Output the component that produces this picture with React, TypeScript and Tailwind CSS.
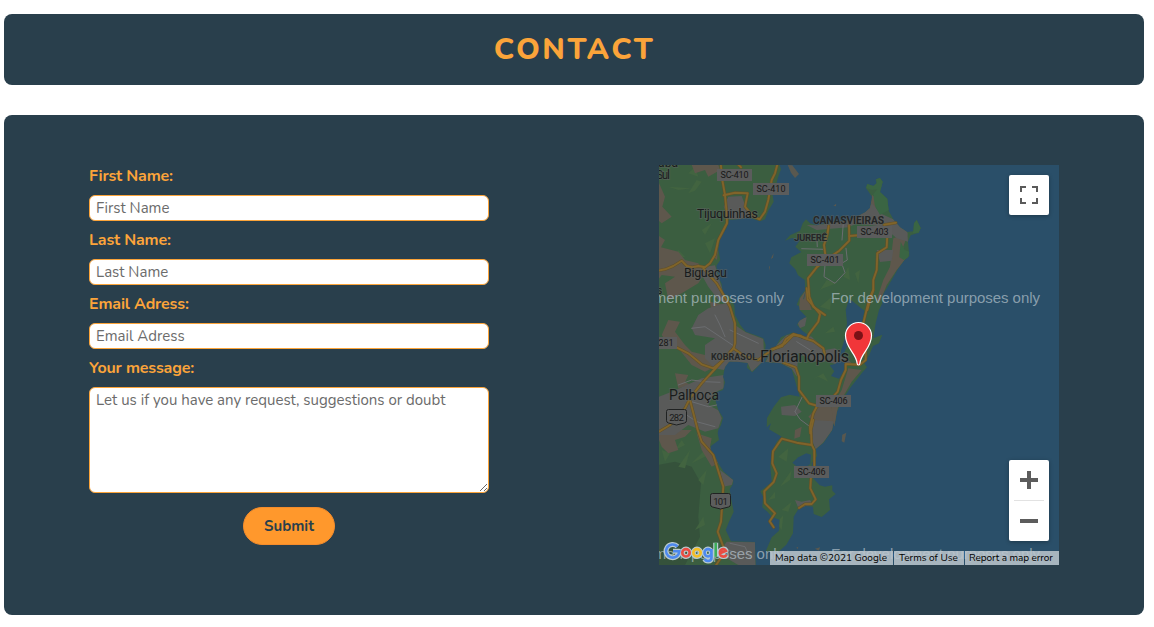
import React from "react";

type Pair = [number, number];

// Scales a list of traced points down to map coordinates.
function trace(ox: number, oy: number, pts: string): string {
  return pts
    .trim()
    .split(/\s+/)
    .map((s) => s.split(",").map(Number) as unknown as Pair)
    .map(([x, y]) => `${(ox + x / 3).toFixed(1)},${(oy + y / 3).toFixed(1)}`)
    .join(" ");
}

const nw = (p: string) => trace(655, 160, p);
const west = (p: string) => trace(655, 295, p);
const sw = (p: string) => trace(655, 430, p);
const north = (p: string) => trace(780, 170, p);
const mid = (p: string) => trace(745, 290, p);
const south = (p: string) => trace(745, 420, p);

const mainland = [
  "650,160",
  nw("372,10 378,28 368,55 362,80 352,100 356,125 340,152 330,178 316,184 296,178 280,172 250,178 222,180 214,205 196,235 190,268 196,300 184,318 190,350 200,372 204,400"),
  west("225,5 238,30 240,60 256,90 272,110 300,120 325,130 332,150 326,196 308,215 292,232 276,218 278,204 245,200 222,200 210,216 204,245 210,262 204,285 188,290 182,318 190,345 204,368 198,390 190,405"),
  sw("188,10 192,30 168,48 166,62 180,78 190,100 206,125 235,150 234,162 224,178 230,215 236,245 222,275 212,300 228,334 300,336 302,405 330,410"),
  "650,570",
].join(" ");

const island = [
  north("15,212 30,196 60,182 68,160 78,148 90,160 110,166 140,158 200,152 232,140 256,126 270,114 276,80 258,54 262,42 280,48 290,40 288,28 300,24 308,35 300,66 322,86 326,122 340,148 360,172 382,186 400,184 402,160 410,150 422,174 416,188 392,196 384,215 388,258 372,272 352,300 335,330 310,372"),
  mid("412,40 402,60 392,100 385,145 412,134 402,160 384,168 375,190 358,220 366,232 350,250 336,268 318,290 292,330 276,365 268,410"),
  south("265,8 262,30 236,68 212,88 216,108 200,130 202,172 224,196 240,200 262,196 262,212 272,222 252,238 255,270 230,291 206,282 204,260 182,258 160,268 146,290 144,340 124,374 100,396 62,394 80,352 102,332 104,300 80,290 68,276 52,262 54,230 46,214 80,186 76,140 80,96 96,64 110,50 72,28 78,10"),
  mid("65,412 66,384 86,350 108,322 134,314 164,320 150,272 140,238 106,220 60,216 70,190 92,170 108,142 140,128 170,146 190,136 172,122 156,104 164,92 184,80 164,60 162,40 178,25 182,0"),
  north("62,412 50,404 60,380 76,360 74,330 54,316 46,298 28,280 34,262 64,246 46,230 62,208 36,204"),
].join(" ");

const urban: string[] = [
  nw("220,110 260,108 272,140 290,178 250,178 222,178 206,140"),
  nw("150,320 180,316 190,350 206,400 214,430 190,420 160,380 140,345"),
  west("110,100 130,60 160,40 225,20 240,90 272,112 325,132 328,196 290,230 278,204 225,200 206,225 180,220 150,190 150,150 180,130 120,120"),
  west("0,310 50,290 140,250 206,240 206,280 180,292 160,330 190,346 200,370 190,400 150,410 100,390 60,420 0,420"),
  sw("195,120 235,150 230,165 205,170"),
  sw("215,335 300,337 302,405 250,405 190,370"),
  north("80,165 110,166 200,152 256,126 276,100 300,130 340,148 382,186 384,215 350,205 310,170 230,160 206,172 110,180"),
  north("290,240 340,240 335,272 300,276"),
  mid("125,135 160,130 200,140 240,180 240,215 210,215 160,190 155,260 140,236 108,220 62,215 82,178"),
  mid("108,350 150,345 170,365 150,378 110,375"),
  mid("240,180 270,175 300,200 320,220 280,225 250,215"),
  south("202,0 265,4 262,30 234,68 212,88 200,60"),
  south("150,240 170,245 195,240 205,255 160,264"),
  mid("155,90 185,82 180,108 164,115"),
];

const earth: string[] = [
  nw("8,60 30,110 22,140 50,170 20,190 8,180"),
  nw("110,15 190,15 196,30 160,50 150,30 120,40"),
  nw("8,225 30,240 18,262 70,275 90,300 130,310 150,340 130,370 80,400 40,420 30,370 60,350 20,345 8,360"),
  nw("220,180 206,225 190,240 186,265 176,290 186,300 192,240 200,220"),
  west("40,75 75,80 60,110 90,150 110,170 150,180 180,215 150,230 110,210 70,160 40,150 20,120"),
  west("60,235 100,240 90,262 110,270 70,280"),
  west("165,20 210,30 190,80 170,60"),
  west("8,340 80,330 110,360 70,390 40,410 8,400"),
  sw("0,0 110,0 90,20 60,30 70,60 40,70 20,50"),
  sw("125,10 170,25 165,50 190,100 170,110 140,60"),
  north("340,205 384,190 370,230 378,265 350,300 320,345 300,395 290,390 310,330 330,290"),
  north("120,158 256,128 270,115 276,75 284,80 290,150 230,160"),
  mid("310,235 350,240 320,275 280,345 270,410 250,400 260,350 290,300"),
  mid("190,380 230,340 260,350 265,415 230,420"),
  south("150,30 170,20 165,50 148,56"),
  north("60,385 76,362 95,420 56,420"),
];

const lightGreen: string[] = [
  nw("100,100 125,60 140,65 120,92"), nw("40,80 110,85 70,90"), nw("140,210 170,190 150,225"),
  nw("100,40 120,22 130,50"), nw("55,300 70,270 90,290"), nw("230,130 250,122 260,160"),
  nw("150,250 180,235 165,280"), north("120,360 140,330 170,340 130,355"),
  north("190,320 205,290 210,330"), north("225,310 240,300 235,340"),
  mid("225,50 260,20 255,60"), mid("240,130 265,110 270,125"), mid("200,270 235,250 250,275 220,260"),
  sw("20,60 45,70 30,95"), sw("70,110 105,60 90,115"), sw("110,100 150,60 160,75"),
  sw("60,60 80,30 90,45"), sw("130,150 155,120 145,165"), south("100,110 130,85 125,125"),
  south("105,200 140,150 135,180"), south("70,240 90,215 90,235"), south("110,270 140,245 130,275"),
  sw("120,300 145,260 150,285"), sw("365,280 385,255 380,300"),
];

const darkGreen: string[] = [
  sw("8,105 60,95 110,110 138,160 130,260 135,320 90,405 8,405"),
];

const water: string[] = [
  mid("312,26 330,40 358,62 352,96 330,100 310,160 292,202 284,196 298,150 306,100 302,60"),
  mid("254,226 270,222 282,212 304,218 296,244 282,266 258,258 268,244"),
  south("142,128 160,112 184,100 198,104 196,132 176,146 156,140"),
];

const roads: string[] = [
  nw("197,10 202,60 210,105 215,160 216,190 190,240 180,285 165,310 150,322 130,318 112,322 95,318 80,302 55,318 30,328 8,332"),
  nw("248,12 258,22"),
  nw("368,10 360,40 350,60 340,120 330,155 314,178 295,170 270,140 278,100 240,98 206,106"),
  nw("145,325 185,370 200,395 225,440 240,490 240,550 236,565"),
  west("235,160 205,195 175,220 140,208 100,175 66,158 30,150 8,148"),
  west("205,195 140,265 105,310 90,340 45,390 8,412"),
  west("104,312 128,405 140,440 175,480 205,575 198,680 188,710 205,755 207,775 182,812"),
  west("235,160 270,185 310,195 350,165 390,145 415,120 435,122 450,130 475,138 505,160 512,190"),
  mid("185,-5 188,28 225,72 220,95 192,132 186,146 145,132 122,148 112,168 80,178"),
  mid("115,218 152,232 162,260 162,300 192,340 218,348 260,325 278,305 288,270 302,240 302,222 345,224 362,210 362,185 352,160 355,100 372,30 385,0"),
  mid("215,350 205,370 195,410 196,430"),
  south("205,0 198,30 200,75 155,68 110,56 84,94 82,130 95,160 86,186 58,214 60,250 90,280 74,304 86,322"),
  south("200,74 208,90 208,140 198,170 196,205 212,238 200,252 180,252 162,264"),
  north("146,168 142,195 132,225 138,270 112,290 84,325 88,380 100,410 135,435"),
  north("207,166 208,212 178,242 140,268"),
  north("208,198 245,195"),
  north("312,164 348,158"),
  north("322,195 320,232 292,250 290,300 280,330 280,360 270,390 262,420"),
];

const streets: string[] = [
  north("135,285 132,320 165,340 195,308 185,280 202,270 198,235"),
  north("65,236 130,238"), north("190,160 186,210"), north("110,195 112,230"),
  west("110,100 150,95 180,115 240,155"), west("180,60 195,90 210,125"), west("225,105 310,145"),
  west("70,270 110,255 150,260 195,262"), west("110,320 160,335 185,330"), west("80,350 125,380 180,395"),
  mid("150,365 172,320"), mid("150,365 165,388 195,410"), mid("155,155 195,180 218,210"),
  sw("225,340 270,350 285,385"), sw("205,355 250,370"),
];

const islets: string[] = [
  nw("398,15 412,16 432,42 420,54 408,38"),
  nw("540,135 544,132 542,140"), nw("350,290 356,280 354,292 348,298"), nw("342,320 345,318 344,332"),
  north("160,108 168,102 168,108"),
  south("292,44 304,38 298,68 290,64"),
  south("154,383 160,380 158,387"),
  sw("480,356 495,352 492,362"),
];

interface BadgeProps {
  x: number;
  y: number;
  text: string;
  w?: number;
}

function RouteBadge({ x, y, text, w = 35 }: BadgeProps) {
  return (
    <g>
      <rect x={x} y={y} width={w} height={12} fill="#5b5c5c" />
      <text x={x + w / 2} y={y + 9.2} fontSize={9} textAnchor="middle" textLength={w - 7} fill="#171717">
        {text}
      </text>
    </g>
  );
}

function Shield({ x, y, text }: BadgeProps) {
  return (
    <g>
      <path
        d={`M${x + 2} ${y}h16q2 0 2 2v9q0 2-2 2.500l-8 2-8-2q-2-.5-2-2.500v-9q0-2 2-2z`}
        fill="#5c5d5d"
        stroke="#202222"
        strokeWidth={1}
      />
      <text x={x + 10} y={y + 11} fontSize={9.500} textAnchor="middle" textLength={14.500} fill="#1a1a1a">
        {text}
      </text>
    </g>
  );
}

interface PlaceProps {
  x: number;
  y: number;
  size: number;
  len?: number;
  bold?: boolean;
  children: string;
}

function PlaceName({ x, y, size, len, bold, children }: PlaceProps) {
  return (
    <text
      x={x}
      y={y}
      fontSize={size}
      textLength={len}
      fontWeight={bold ? 700 : 400}
      fill={bold ? "#252727" : "#191b1b"}
      stroke="#5d6260"
      strokeWidth={bold ? 1.6 : 1.8}
      strokeOpacity={0.55}
      paintOrder="stroke"
    >
      {children}
    </text>
  );
}

function MapDrawing() {
  return (
    <svg viewBox="659 165 400 400" className="block h-[400px] w-[400px] font-['Roboto',sans-serif]">
      <defs>
        <clipPath id="land">
          <polygon points={mainland} />
          <polygon points={island} />
        </clipPath>
      </defs>
      <rect x={659} y={165} width={400} height={400} fill="#2a4f69" />
      <polygon points={mainland} fill="#3b5e40" />
      <polygon points={island} fill="#3a5e41" />
      <g clipPath="url(#land)">
        {darkGreen.map((p, i) => <polygon key={i} points={p} fill="#35523b" />)}
        {lightGreen.map((p, i) => <polygon key={i} points={p} fill="#426440" />)}
        {earth.map((p, i) => <polygon key={i} points={p} fill="#5e574c" />)}
        {urban.map((p, i) => <polygon key={i} points={p} fill="#595a59" />)}
        {water.map((p, i) => <polygon key={i} points={p} fill="#2a4f69" />)}
      </g>
      {islets.map((p, i) => <polygon key={i} points={p} fill="#59584f" />)}
      <polygon points={north("258,54 262,42 280,48 290,40 288,28 300,24 308,35 300,66 322,86 326,120 300,135 284,105 280,72 292,58 276,60")} fill="#3a6543" />
      <polygon points={north("400,184 402,160 410,150 422,174 416,188 398,190")} fill="#3a6543" />
      <polygon points={north("362,215 374,240 388,245 384,262 372,270 358,262")} fill="#3a6543" />
      <g fill="none" strokeLinejoin="round" strokeLinecap="round">
        {streets.map((p, i) => <polyline key={i} points={p} stroke="#6b6d70" strokeWidth={1} />)}
        {roads.map((p, i) => <polyline key={i} points={p} stroke="#5f5029" strokeWidth={3} />)}
        {roads.map((p, i) => <polyline key={i} points={p} stroke="#80642a" strokeWidth={1.900} />)}
      </g>

      <PlaceName x={658} y={167} size={12} len={20}>aba</PlaceName>
      <PlaceName x={656} y={179} size={12} len={14}>Sul</PlaceName>
      <PlaceName x={697} y={217.500} size={12.500} len={61}>Tijuquinhas</PlaceName>
      <PlaceName x={684} y={276.500} size={12.500} len={43}>Biguaçu</PlaceName>
      <PlaceName x={657} y={294} size={10}>s</PlaceName>
      <PlaceName x={813} y={223.500} size={10.300} len={71} bold>CANASVIEIRAS</PlaceName>
      <PlaceName x={794} y={240.500} size={9.800} len={33} bold>JURERÊ</PlaceName>
      <PlaceName x={711} y={359.500} size={9} len={46} bold>KOBRASOL</PlaceName>
      <PlaceName x={760} y={362} size={16} len={89}>Florianópolis</PlaceName>
      <PlaceName x={669} y={400} size={14} len={50}>Palhoça</PlaceName>

      <RouteBadge x={717} y={169} text="SC-410" />
      <RouteBadge x={753} y={183} text="SC-410" w={36} />
      <RouteBadge x={857} y={226} text="SC-403" />
      <RouteBadge x={807} y={254} text="SC-401" w={36} />
      <RouteBadge x={816} y={395} text="SC-406" />
      <RouteBadge x={794} y={466} text="SC-406" />
      <RouteBadge x={655} y={337} text="281" w={22} />
      <Shield x={666.500} y={409.500} text="282" />
      <Shield x={710.500} y={493.500} text="101" />

      <g className="font-['Liberation_Sans',sans-serif]" fontSize={15} fill="#b9c6cf" fillOpacity={0.68}>
        <text x={575} y={303} textLength={209}>For development purposes only</text>
        <text x={831} y={303} textLength={209}>For development purposes only</text>
        <text x={575} y={559} textLength={209}>For development purposes only</text>
        <text x={831} y={559} textLength={209}>For development purposes only</text>
      </g>

      <path
        d="M858.500 365c-.9 0-1.300-.8-1.400-1.800-.8-9.800-11.600-15-11.600-27.700a13 13 0 0 1 26 0c0 12.700-10.800 17.900-11.600 27.700-.1 1-.5 1.800-1.400 1.800z"
        fill="#f13639"
        stroke="#fff"
        strokeWidth={1.200}
      />
      <circle cx={858.500} cy={335.500} r={4.500} fill="#7a1116" />
    </svg>
  );
}

function GoogleMark() {
  return (
    <svg viewBox="0 0 66 26" className="absolute bottom-[-1px] left-1 h-[26px] w-[66px]" role="img" aria-label="Google">
      <g fill="none" stroke="#b8cad0" strokeWidth="5" strokeLinejoin="round">
        <path d="M14.500 6.500A6.600 6.600 0 1 0 16.300 11.300H10" />
        <circle cx="23" cy="12.800" r="3.700" />
        <circle cx="34" cy="12.800" r="3.700" />
        <path d="M48.500 9v8.500q0 3.500-3.500 3.500-2.200 0-3.400-2M48.500 12.800a3.500 3.700 0 1 1-7 0 3.500 3.700 0 1 1 7 0M52.700 2.800v14M57 13.300l6-2.500q-1-2.100-3.100-1.700-3.200.8-3 4 .4 3.400 3.500 3.500 2 0 3.200-1.900" />
      </g>
      <g fill="none" strokeWidth="2.600">
        <path d="M14.500 6.500A6.600 6.600 0 1 0 16.300 11.300H10" stroke="#4d89ef" />
        <circle cx="23" cy="12.800" r="3.700" stroke="#e94d42" />
        <circle cx="34" cy="12.800" r="3.700" stroke="#f4bd25" />
        <path d="M48.500 9v8.500q0 3.500-3.500 3.500-2.200 0-3.400-2M48.500 12.800a3.500 3.700 0 1 1-7 0 3.500 3.700 0 1 1 7 0" stroke="#4d89ef" />
        <path d="M52.700 2.800v14" stroke="#3dad5a" />
        <path d="M57 13.300l6-2.500q-1-2.100-3.100-1.700-3.200.8-3 4 .4 3.400 3.500 3.500 2 0 3.200-1.900" stroke="#e94d42" />
      </g>
    </svg>
  );
}

function MapPanel() {
  return (
    <div className="relative h-[400px] w-[400px] overflow-hidden">
      <MapDrawing />
      <button aria-label="Fullscreen" className="absolute top-[10px] right-[10px] flex h-10 w-10 items-center justify-center rounded-[2px] bg-white shadow-[0_1px_4px_rgba(0,0,0,0.3)]">
        <svg viewBox="0 0 18 18" className="h-[18px] w-[18px]" fill="none" stroke="#5a5a5a" strokeWidth="2">
          <path d="M1 6V1h5M12 1h5v5M17 12v5h-5M6 17H1v-5" />
        </svg>
      </button>
      <div className="absolute right-[10px] bottom-6 flex h-[81px] w-10 flex-col items-center rounded-[2px] bg-white shadow-[0_1px_4px_rgba(0,0,0,0.3)]">
        <button aria-label="Zoom in" className="flex h-10 w-10 items-center justify-center">
          <svg viewBox="0 0 18 18" className="h-[18px] w-[18px]" fill="#5c5c5c"><path d="M7 0h4v7h7v4h-7v7H7v-7H0V7h7z" /></svg>
        </button>
        <div className="h-px w-[30px] bg-[#e2e2e2]" />
        <button aria-label="Zoom out" className="flex h-10 w-10 items-center justify-center">
          <svg viewBox="0 0 18 18" className="h-[18px] w-[18px]" fill="#5c5c5c"><path d="M0 7h18v4H0z" /></svg>
        </button>
      </div>
      <GoogleMark />
      <div className="absolute right-0 bottom-0 flex h-[14px] gap-px text-[10px] leading-[14px] whitespace-nowrap text-black">
        <span className="w-[123px] bg-[#bdc7ce]/85 pl-[5px]">Map data ©2021 Google</span>
        <span className="w-[70px] bg-[#bdc7ce]/85 pl-[5px]">Terms of Use</span>
        <span className="w-[94px] bg-[#bdc7ce]/85 pl-[4px] tracking-[-0.06px]">Report a map error</span>
      </div>
    </div>
  );
}

const fields = ["First Name", "Last Name", "Email Adress"];

export default function App() {
  return (
    <div className="h-[627px] overflow-hidden bg-white pt-[14px] pr-[10px] pl-1 font-['Nunito','Lato',sans-serif]">
      <header className="flex h-[71px] items-center justify-center rounded-lg bg-[#293f4c]">
        <h1 className="pl-px text-[30px] leading-none font-extrabold tracking-[2.5px] text-[#fba43a]">CONTACT</h1>
      </header>
      <main className="mt-[30px] flex h-[500px] items-start justify-between rounded-lg bg-[#293f4c] px-[85px] pt-[50px]">
        <form className="flex w-[400px] flex-col" onSubmit={(e) => e.preventDefault()}>
          {fields.map((name) => (
            <label key={name} className="flex h-16 flex-col">
              <span className="h-[30px] pt-[1px] text-[16px] leading-5 font-bold tracking-[-0.15px] text-[#fba43a]">{name}:</span>
              <input
                placeholder={name}
                className="h-[26px] rounded-md border border-[#fba43a] bg-white px-1.5 text-[15px] leading-6 placeholder:text-[#6b6b6b] placeholder:opacity-100"
              />
            </label>
          ))}
          <label className="flex flex-col">
            <span className="h-[30px] pt-[1px] text-[16px] leading-5 font-bold tracking-[-0.15px] text-[#fba43a]">Your message:</span>
            <textarea
              placeholder="Let us if you have any request, suggestions or doubt"
              className="h-[106px] rounded-md border border-[#fba43a] bg-white px-1.5 pt-px text-[15px] leading-[22px] placeholder:text-[#6b6b6b] placeholder:opacity-100"
            />
          </label>
          <button className="mt-[14px] h-[38px] w-[92px] self-center rounded-full border border-[#f58c2b] bg-[#ff982c] text-[15px] font-bold text-[#293f4c]">
            Submit
          </button>
        </form>
        <MapPanel />
      </main>
    </div>
  );
}
